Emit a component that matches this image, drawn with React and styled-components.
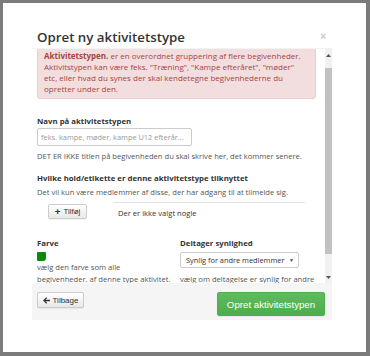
import React from "react"
import styled, { createGlobalStyle } from "styled-components"

const GlobalStyle = createGlobalStyle`
  html, body {
    margin: 0;
    padding: 0;
    background: #7b7b7b;
    font-family: "Open Sans", "Liberation Sans", sans-serif;
    color: #333;
  }
  * {
    box-sizing: border-box;
  }
`

const Frame = styled.div`
  margin: 3px 4px 4px 3px;
  height: 349px;
  background: #fff;
  padding-left: 29px;
  overflow: hidden;
`

const Modal = styled.div`
  width: 300px;
  background: #fff;
`

const Header = styled.div`
  height: 46px;
  padding: 24px 6px 0 5px;
  display: flex;
  justify-content: space-between;
  border-bottom: 1px solid #f3f3f3;
`

const Title = styled.h4`
  margin: 0;
  font-size: 13.3px;
  line-height: 20px;
  font-weight: 600;
  color: #333;
`

const Close = styled.span`
  font-family: "Liberation Sans", sans-serif;
  font-size: 10px;
  line-height: 20px;
  color: #c8c8c8;
  font-weight: 700;
`

const Body = styled.div`
  display: flex;
  height: 234px;
`

const Viewport = styled.div`
  flex: 1;
  overflow: hidden;
  padding: 0 9px 0 5px;
`

const Scrolled = styled.div`
  margin-top: ${p => p.$offset}px;
`

const Scrollbar = styled.div`
  width: 7px;
  background: #f1f1f1;
  display: flex;
  flex-direction: column;
  align-items: center;
`

const Arrow = styled.div`
  height: ${p => p.$h}px;
  display: flex;
  align-items: center;
  justify-content: center;
  svg {
    display: block;
  }
`

const Thumb = styled.div`
  width: 100%;
  height: ${p => p.$h}px;
  background: #c1c1c1;
`

const Spacer = styled.div`
  height: ${p => p.$h}px;
`

const Alert = styled.div`
  background: #f2dede;
  border: 1px solid #ebccd1;
  border-radius: 3px;
  color: #a94442;
  padding: 7px 6px 4px 6px;
  font-size: 8px;
  line-height: 11px;
  white-space: nowrap;
  b {
    font-weight: 700;
  }
`

const Group = styled.div`
  margin-top: ${p => p.$mt || 0}px;
`

const Label = styled.div`
  font-size: 7.8px;
  line-height: 12px;
  font-weight: 700;
  color: #333;
  margin-bottom: ${p => p.$mb || 0}px;
`

const Help = styled.div`
  font-size: 7.6px;
  line-height: 12px;
  color: #555;
  margin-top: ${p => p.$mt || 0}px;
`

const Input = styled.div`
  width: 155px;
  height: 18px;
  border: 1px solid #ccc;
  border-radius: 2px;
  padding: 0 3px;
  font-size: 7.4px;
  line-height: 16px;
  color: #999;
  white-space: nowrap;
  overflow: hidden;
`

const TagRow = styled.div`
  display: flex;
  margin-top: 4px;
`

const TagCell = styled.div`
  width: 77px;
  padding: 2px 0 0 11px;
  display: flex;
  align-items: flex-start;
`

const TagList = styled.div`
  width: 191px;
  border-top: 1px solid #e4e4e4;
  padding: 4px 4px;
  font-size: 7.6px;
  line-height: 12px;
  color: #333;
`

const Button = styled.div`
  display: flex;
  align-items: center;
  justify-content: center;
  gap: 3px;
  height: ${p => p.$h}px;
  width: ${p => p.$w}px;
  border-radius: 2px;
  font-family: "Liberation Sans", Arial, sans-serif;
  font-size: ${p => p.$fs}px;
  color: ${p => (p.$primary ? "#fff" : "#333")};
  background: ${p =>
    p.$primary
      ? "linear-gradient(#5fba5f, #4cae4c)"
      : "linear-gradient(#fff, #e8e8e8)"};
  border: 1px solid ${p => (p.$primary ? "#4cae4c" : "#ccc")};
  box-shadow: 0 1px 1px rgba(0, 0, 0, 0.06);
  b {
    font-size: ${p => p.$fs + 2}px;
    line-height: 1;
  }
  svg {
    display: block;
  }
`

const Cols = styled.div`
  display: grid;
  grid-template-columns: 143px 1fr;
  margin-top: 14px;
`

const Swatch = styled.div`
  width: 9px;
  height: 9px;
  background: #0a8a0a;
  border-radius: 1px 1px 3px 1px;
  margin-top: 3px;
`

const Select = styled.div`
  width: 119px;
  height: 16px;
  margin-top: 3px;
  border: 1px solid #ccc;
  border-radius: 2px;
  display: flex;
  align-items: center;
  justify-content: space-between;
  padding: 0 4px 0 5px;
  font-size: 7.4px;
  color: #333;
  span {
    font-size: 5px;
    color: #444;
  }
`

const Footer = styled.div`
  height: 37px;
  background: #f5f5f5;
  padding: 9px 7px 0 5px;
  display: flex;
  justify-content: space-between;
  align-items: flex-start;
`

const ArrowUp = () => (
  <svg width="5" height="3" viewBox="0 0 5 3">
    <path d="M0 3 L2.5 0 L5 3 Z" fill="#555" />
  </svg>
)

const ArrowDown = () => (
  <svg width="5" height="3" viewBox="0 0 5 3">
    <path d="M0 0 L2.5 3 L5 0 Z" fill="#555" />
  </svg>
)

const BackArrow = () => (
  <svg width="7" height="7" viewBox="0 0 7 7">
    <path d="M0 3.5 L3.3 0.2 L4.2 1.1 L2.5 2.8 L7 2.8 L7 4.2 L2.5 4.2 L4.2 5.9 L3.3 6.8 Z" fill="#333" />
  </svg>
)

const App = () => {
  return (
    <>
      <GlobalStyle />
      <Frame>
        <Modal>
          <Header>
            <Title>Opret ny aktivitetstype</Title>
            <Close>×</Close>
          </Header>

          <Body>
            <Viewport>
              <Scrolled $offset={-7}>
                <Alert>
                  <b>Aktivitetstypen.</b> er en overordnet gruppering af flere
                  begivenheder.
                  <br />
                  Aktivitstypen kan være feks. "Træning", "Kampe efteråret",
                  "møder"
                  <br />
                  etc, eller hvad du synes der skal kendetegne begivenhederne
                  du
                  <br />
                  opretter under den.
                </Alert>

                <Group $mt={16}>
                  <Label $mb={1}>Navn på aktivitetstypen</Label>
                  <Input>feks. kampe, møder, kampe U12 efterår...</Input>
                  <Help $mt={4}>
                    DET ER IKKE titlen på begivenheden du skal skrive her, det
                    kommer senere.
                  </Help>
                </Group>

                <Group $mt={10}>
                  <Label $mb={2}>
                    Hvilke hold/etikette er denne aktivitetstype tilknyttet
                  </Label>
                  <Help>
                    Det vil kun være medlemmer af disse, der har adgang til at
                    tilmelde sig.
                  </Help>
                  <TagRow>
                    <TagCell>
                      <Button $w={39} $h={15} $fs={7.8}>
                        <b>+</b> Tilføj
                      </Button>
                    </TagCell>
                    <TagList>Der er ikke valgt nogle</TagList>
                  </TagRow>
                </Group>

                <Cols>
                  <div>
                    <Label>Farve</Label>
                    <Swatch />
                    <Help>
                      vælg den farve som alle
                      <br />
                      begivenheder. af denne type aktivitet.
                    </Help>
                  </div>
                  <div>
                    <Label>Deltager synlighed</Label>
                    <Select>
                      Synlig for andre medlemmer <span>▼</span>
                    </Select>
                    <Help $mt={5}>vælg om deltagelse er synlig for andre</Help>
                  </div>
                </Cols>
              </Scrolled>
            </Viewport>

            <Scrollbar>
              <Arrow $h={12}>
                <ArrowUp />
              </Arrow>
              <Spacer $h={7} />
              <Thumb $h={186} />
              <Spacer $h={18} />
              <Arrow $h={11}>
                <ArrowDown />
              </Arrow>
            </Scrollbar>
          </Body>

          <Footer>
            <Button $w={47} $h={16} $fs={8}>
              <BackArrow /> Tilbage
            </Button>
            <Button $primary $w={108} $h={24} $fs={9.7}>
              Opret aktivitetstypen
            </Button>
          </Footer>
        </Modal>
      </Frame>
    </>
  )
}

export default App
